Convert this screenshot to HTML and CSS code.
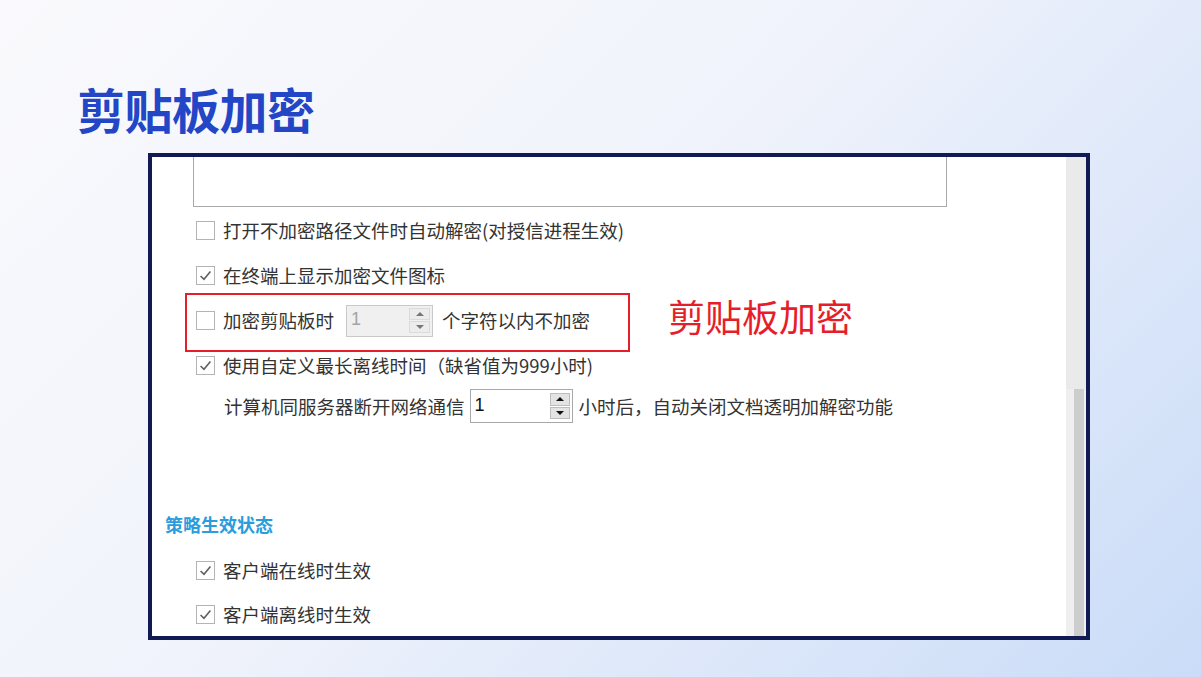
FILE: index.html
```html
<!DOCTYPE html>
<html lang="zh-CN">
<head>
    <meta charset="UTF-8">
    <title>剪贴板加密</title>
    <link rel="stylesheet" href="styles.css">
</head>
<body>
<div class="slide">
    <h1 class="title">剪贴板加密</h1>
    <div class="shot">
        <div class="panel">
            <div class="memo"></div>

            <div class="row first">
                <span class="cb"></span>
                <span class="txt">打开不加密路径文件时自动解密(对授信进程生效)</span>
            </div>
            <div class="row">
                <span class="cb"><svg viewBox="0 0 19 19"><path d="M4 10 L7.8 13.8 L15 5"/></svg></span>
                <span class="txt">在终端上显示加密文件图标</span>
            </div>
            <div class="row marked">
                <span class="cb"></span>
                <span class="txt">加密剪贴板时</span>
                <span class="spin off">
                    <span class="val">1</span>
                    <span class="btns">
                        <i><svg viewBox="0 0 10 6"><path d="M1 5 L5 1 L9 5 Z"/></svg></i>
                        <i><svg viewBox="0 0 10 6"><path d="M1 1 L5 5 L9 1 Z"/></svg></i>
                    </span>
                </span>
                <span class="txt">个字符以内不加密</span>
                <div class="mark-box"></div>
                <div class="mark-note">剪贴板加密</div>
            </div>
            <div class="row">
                <span class="cb"><svg viewBox="0 0 19 19"><path d="M4 10 L7.8 13.8 L15 5"/></svg></span>
                <span class="txt">使用自定义最长离线时间（缺省值为999小时)</span>
            </div>
            <div class="row sub">
                <span class="txt">计算机同服务器断开网络通信</span>
                <span class="spin">
                    <span class="val">1</span>
                    <span class="btns">
                        <i><svg viewBox="0 0 10 6"><path d="M1 5 L5 1 L9 5 Z"/></svg></i>
                        <i><svg viewBox="0 0 10 6"><path d="M1 1 L5 5 L9 1 Z"/></svg></i>
                    </span>
                </span>
                <span class="txt">小时后，自动关闭文档透明加解密功能</span>
            </div>

            <div class="section">策略生效状态</div>

            <div class="row low">
                <span class="cb"><svg viewBox="0 0 19 19"><path d="M4 10 L7.8 13.8 L15 5"/></svg></span>
                <span class="txt">客户端在线时生效</span>
            </div>
            <div class="row last">
                <span class="cb"><svg viewBox="0 0 19 19"><path d="M4 10 L7.8 13.8 L15 5"/></svg></span>
                <span class="txt">客户端离线时生效</span>
            </div>
        </div>
        <div class="scrollbar">
            <div class="sb-top"></div>
            <div class="sb-track"><div class="sb-thumb"></div></div>
        </div>
    </div>
</div>
</body>
</html>
```

FILE: styles.css
```css
* {
    margin: 0;
    padding: 0;
    box-sizing: border-box;
}

html, body {
    width: 1201px;
    height: 677px;
    overflow: hidden;
}

body {
    font-family: "Noto Sans CJK SC", "Noto Sans", sans-serif;
    background: linear-gradient(135deg, #fafafd 0%, #f0f3fb 45%, #cadcf8 100%);
}

.slide {
    padding: 84px 0 0 77px;
}

.title {
    font-size: 48px;
    line-height: 48px;
    font-weight: 700;
    letter-spacing: -0.5px;
    color: #2346c6;
}

/* window capture with dark frame */
.shot {
    margin: 21px 0 0 71px;
    width: 942px;
    height: 487px;
    border: 4px solid #111a52;
    background: #fff;
    display: flex;
}

.panel {
    flex: 1;
    overflow: hidden;
    color: #333;
    font-size: 18.5px;
    line-height: 1;
}

.memo {
    margin-left: 41px;
    width: 754px;
    height: 50px;
    border: 1px solid #a9a9a9;
    border-top: none;
}

.row {
    height: 45px;
    display: flex;
    align-items: center;
    padding-left: 44px;
    position: relative;
}

.row.first {
    margin-top: 1px;
}

.row.sub {
    height: 36px;
    padding-left: 72px;
}

.row.low {
    margin-top: 12px;
    height: 44px;
}

.row.last {
    height: 44px;
}

.txt {
    white-space: nowrap;
}

.cb {
    width: 19px;
    height: 19px;
    border: 1.5px solid #b4b4b4;
    background: #fff;
    margin-right: 8px;
    flex: none;
    display: flex;
}

.cb svg {
    width: 100%;
    height: 100%;
    fill: none;
    stroke: #606060;
    stroke-width: 1.8;
}

/* number spinner */
.spin {
    display: flex;
    align-items: center;
    width: 103px;
    height: 34px;
    margin: 0 6px 0 5px;
    padding: 0 2px 0 4px;
    border: 1px solid #a8a8a8;
    background: #fff;
    flex: none;
}

.spin .val {
    flex: 1;
    font-family: "Liberation Sans", Arial, sans-serif;
    font-size: 18px;
    color: #111;
    padding-bottom: 3px;
}

.spin .btns {
    display: flex;
    flex-direction: column;
    width: 20px;
    height: 26px;
    gap: 1px;
}

.spin .btns i {
    flex: 1;
    display: flex;
    align-items: center;
    justify-content: center;
    background: #e3e3e3;
    border: 1px solid #bdbdbd;
}

.spin .btns svg {
    width: 10px;
    height: 6px;
    fill: #111;
}

.spin.off {
    width: 87px;
    height: 32px;
    margin: 0 9px 0 12px;
    border-color: #c9c9c9;
    background: #f0f0f0;
}

.spin.off .val {
    color: #a5a5a5;
}

.spin.off .btns {
    width: 21px;
    height: 25px;
}

.spin.off .btns i {
    background: #ececec;
    border-color: #dadada;
}

.spin.off .btns svg {
    fill: #777;
}

/* red call-out over the clipboard row */
.mark-box {
    position: absolute;
    left: 33px;
    top: -5px;
    width: 445px;
    height: 59px;
    border: 2px solid #e61e2a;
}

.mark-note {
    position: absolute;
    left: 516px;
    top: 0;
    font-size: 37px;
    line-height: 37px;
    color: #e61e2a;
    white-space: nowrap;
}

.section {
    margin: 88px 0 0 13px;
    height: 24px;
    line-height: 24px;
    font-size: 18px;
    font-weight: 700;
    color: #2b9cdc;
}

.scrollbar {
    width: 20px;
    display: flex;
    flex-direction: column;
}

.sb-top {
    height: 232px;
    background: #eaeaea;
}

.sb-track {
    flex: 1;
    background: #efefef;
    padding: 0 2px 0 8px;
}

.sb-thumb {
    height: 100%;
    background: #cdcdcd;
}
```
